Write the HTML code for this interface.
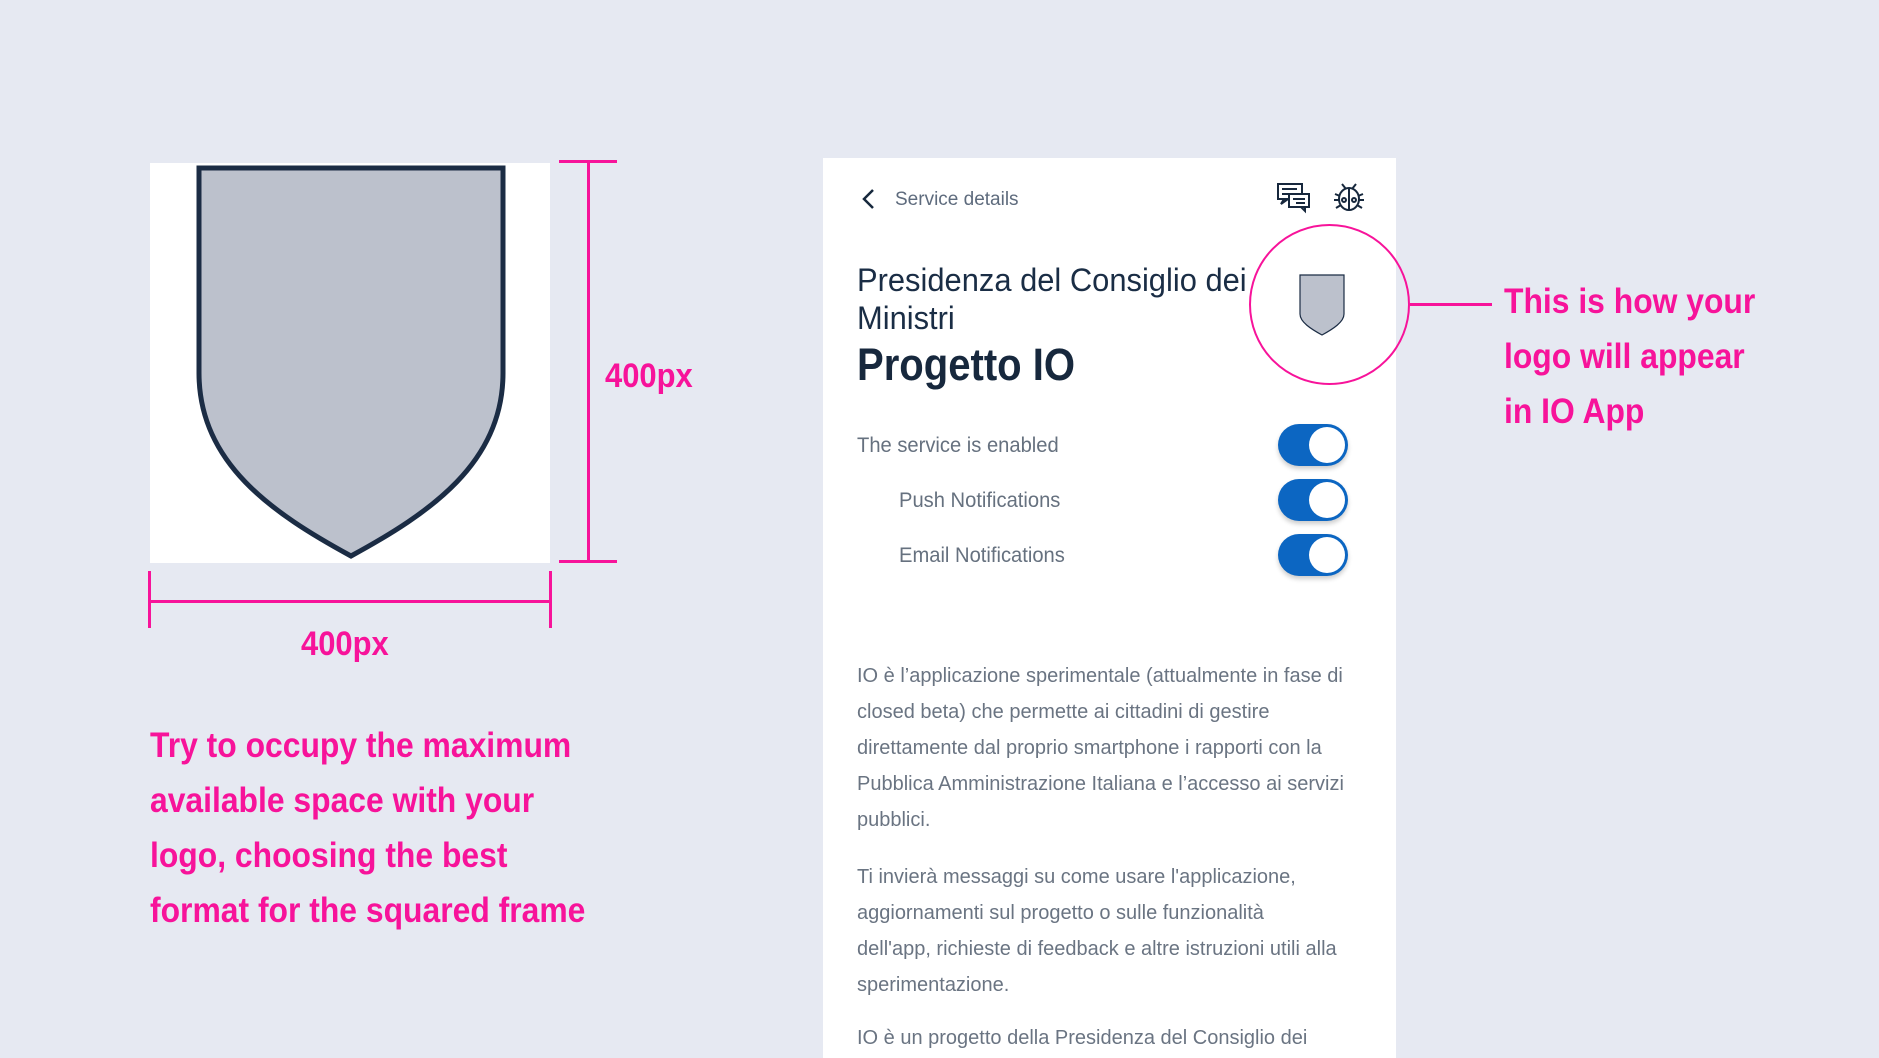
<!DOCTYPE html>
<html><head><meta charset="utf-8"><style>
*{margin:0;padding:0;box-sizing:border-box}
body{width:1879px;height:1044px;background:#e6e9f2;position:relative;overflow:hidden;font-family:"Liberation Sans",sans-serif}
.abs{position:absolute}
.pink{color:#f7139a;font-weight:bold}
.sx{transform:scaleX(0.91);transform-origin:0 0}
.line{background:#f7139a;position:absolute}
.card{position:absolute;left:823px;top:158px;width:573px;height:900px;background:#fff}
.t{position:absolute;white-space:nowrap}
.tog{position:absolute;left:455px;width:70px;height:42px;border-radius:21px;background:#0c66c2;box-shadow:0 3px 5px rgba(0,0,0,.2)}
.tog:after{content:"";position:absolute;right:3px;top:3px;width:36px;height:36px;border-radius:50%;background:#fff}
.p{position:absolute;left:34px;width:530px;font-size:20px;letter-spacing:0;line-height:36px;color:#6a7482;white-space:nowrap}
</style></head><body>
<div class="abs" style="left:150px;top:163px;width:400px;height:400px;background:#fff"></div>
<svg class="abs" style="left:150px;top:163px" width="400" height="400"><path d="M49 5 H353 V210 C353 300 280 350 201 393 C122 350 49 300 49 210 Z" fill="#bcc1cc" stroke="#1b2c44" stroke-width="5"/></svg>
<div class="line" style="left:587px;top:161px;width:3px;height:401px"></div>
<div class="line" style="left:559px;top:160px;width:58px;height:3px"></div>
<div class="line" style="left:559px;top:560px;width:58px;height:3px"></div>
<div class="t pink sx" style="left:605px;top:357px;font-size:34px">400px</div>
<div class="line" style="left:150px;top:600px;width:401px;height:3px"></div>
<div class="line" style="left:148px;top:571px;width:3px;height:57px"></div>
<div class="line" style="left:549px;top:571px;width:3px;height:57px"></div>
<div class="t pink sx" style="left:301px;top:625px;font-size:34px">400px</div>
<div class="abs pink sx" style="left:150px;top:718px;font-size:35px;line-height:55px;white-space:nowrap">Try to occupy the maximum<br>available space with your<br>logo, choosing the best<br>format for the squared frame</div>
<div class="abs pink sx" style="left:1504px;top:274px;font-size:35px;line-height:55px;white-space:nowrap">This is how your<br>logo will appear<br>in IO App</div>
<div class="card">
<svg class="abs" style="left:36px;top:30px" width="20" height="24"><path d="M14 2 L5 11 L14 20" fill="none" stroke="#17283d" stroke-width="2.5"/></svg>
<div class="t" style="left:72px;top:31px;font-size:19px;color:#5e6b7d">Service details</div>
<svg class="abs" style="left:453px;top:24px" width="36" height="32" fill="none" stroke="#17283d" stroke-width="2"><rect x="2" y="2" width="24" height="15"/><path d="M6 7h15M6 12h10M8 17 5 22 12 17"/><rect x="13" y="12" width="20" height="13" fill="#fff"/><path d="M17 17h12M20 21h9M29 25v4l-4-4"/></svg>
<svg class="abs" style="left:509px;top:22px" width="34" height="34" fill="none" stroke="#17283d" stroke-width="2"><ellipse cx="17" cy="19" rx="10" ry="11"/><path d="M17 8v22M10 4l4 5M24 4l-4 5M3 14l5 2M31 14l-5 2M2 20h5M27 20h5M4 28l5-3M30 28l-5-3"/><circle cx="12" cy="20" r="2"/><circle cx="22" cy="20" r="2"/></svg>
<div class="t" style="left:34px;top:103px;font-size:32px;color:#1a2d45;line-height:38px;transform:scaleX(0.965);transform-origin:0 0">Presidenza del Consiglio dei<br>Ministri</div>
<div class="t" style="left:34px;top:181px;font-size:45px;font-weight:bold;color:#17283d;transform:scaleX(0.89);transform-origin:0 0">Progetto IO</div>
<svg class="abs" style="left:476px;top:116px" width="46" height="62"><path d="M1 1 H45 V40 C45 48 34 55 23 61 C12 55 1 48 1 40 Z" fill="#bcc1cc" stroke="#1b2c44" stroke-width="1.2"/></svg>
<div class="t" style="left:34px;top:276px;font-size:21px;color:#66717f;transform:scaleX(0.96);transform-origin:0 0">The service is enabled</div>
<div class="t" style="left:76px;top:331px;font-size:21px;color:#66717f;transform:scaleX(0.96);transform-origin:0 0">Push Notifications</div>
<div class="t" style="left:76px;top:386px;font-size:21px;color:#66717f;transform:scaleX(0.96);transform-origin:0 0">Email Notifications</div>
<div class="tog" style="top:266px"></div>
<div class="tog" style="top:321px"></div>
<div class="tog" style="top:376px"></div>
<div class="p" style="top:500px">IO è l’applicazione sperimentale (attualmente in fase di<br>closed beta) che permette ai cittadini di gestire<br>direttamente dal proprio smartphone i rapporti con la<br>Pubblica Amministrazione Italiana e l’accesso ai servizi<br>pubblici.</div>
<div class="p" style="top:701px">Ti invierà messaggi su come usare l'applicazione,<br>aggiornamenti sul progetto o sulle funzionalità<br>dell'app, richieste di feedback e altre istruzioni utili alla<br>sperimentazione.</div>
<div class="p" style="top:862px">IO è un progetto della Presidenza del Consiglio dei</div>
</div>
<div class="abs" style="left:1249px;top:224px;width:161px;height:161px;border:2.5px solid #f7139a;border-radius:50%"></div>
<div class="line" style="left:1410px;top:303px;width:82px;height:2.5px"></div>
</body></html>
